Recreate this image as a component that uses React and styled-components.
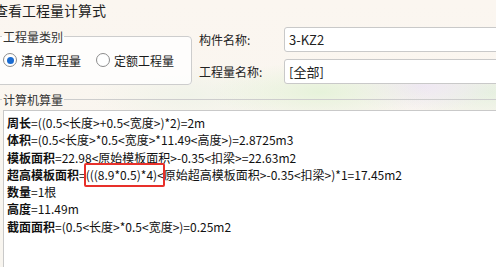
import React from "react"
import styled, { createGlobalStyle } from 'styled-components';

const GlobalStyle = createGlobalStyle`
    html, body {
        margin: 0;
        padding: 0;
    }
    body {
        width: 496px;
        height: 267px;
        overflow: hidden;
        font-family: "Noto Sans CJK SC", "Noto Sans", sans-serif;
        color: #1b1b1b;
    }
`;

const lines = [
    { label: '周长', rest: ['=((0.5<长度>+0.5<宽度>)*2)=2m'] },
    { label: '体积', rest: ['=(0.5<长度>*0.5<宽度>*11.49<高度>)=2.8725m3'] },
    { label: '模板面积', rest: ['=22.98<原始模板面积>-0.35<扣梁>=22.63m2'] },
    { label: '超高模板面积', rest: ['=', { mark: '(((8.9*0.5)*4)<' }, '原始超高模板面积>-0.35<扣梁>)*1=17.45m2'] },
    { label: '数量', rest: ['=1根'] },
    { label: '高度', rest: ['=11.49m'] },
    { label: '截面面积', rest: ['=(0.5<长度>*0.5<宽度>)=0.25m2'] },
];

const App = () => {
    return (
        <StyledWindow>
            <GlobalStyle />
            <Title>查看工程量计算式</Title>
            <TopSection>
                <Group $width={200}>
                    <Legend>工程量类别</Legend>
                    <RadioRow>
                        <RadioOption>
                            <RadioCircle $checked />
                            清单工程量
                        </RadioOption>
                        <RadioOption>
                            <RadioCircle />
                            定额工程量
                        </RadioOption>
                    </RadioRow>
                </Group>
                <Fields>
                    <FieldRow>
                        <FieldLabel>构件名称:</FieldLabel>
                        <Input>3-KZ2</Input>
                    </FieldRow>
                    <FieldRow>
                        <FieldLabel>工程量名称:</FieldLabel>
                        <Input>[全部]</Input>
                    </FieldRow>
                </Fields>
            </TopSection>
            <Group $width={540} $lower>
                <Legend>计算机算量</Legend>
                <FormulaBox>
                    {lines.map((line) => (
                        <FormulaLine key={line.label}>
                            <b>{line.label}</b>
                            {line.rest.map((part, i) =>
                                typeof part === 'string'
                                    ? <React.Fragment key={i}>{part}</React.Fragment>
                                    : <Marked key={i}>{part.mark}</Marked>
                            )}
                        </FormulaLine>
                    ))}
                </FormulaBox>
            </Group>
        </StyledWindow>
    )
}

const StyledWindow = styled.div`
    width: 496px;
    height: 267px;
    overflow: hidden;
    display: flex;
    flex-direction: column;
    background:
        radial-gradient(ellipse 110px 30px at 320px 92px, rgba(228, 242, 216, 0.9), transparent),
        radial-gradient(ellipse 80px 26px at 420px 86px, rgba(238, 230, 244, 0.9), transparent),
        radial-gradient(ellipse 90px 30px at 490px 92px, rgba(228, 240, 222, 0.9), transparent),
        radial-gradient(ellipse 100px 30px at 190px 95px, rgba(236, 242, 230, 0.7), transparent),
        linear-gradient(#fbf6f0, #f8f5ef);
`;

const Title = styled.div`
    height: 20px;
    line-height: 20px;
    font-size: 14px;
    margin-left: -6px;
    white-space: nowrap;
    color: #1f1f1f;
`;

const TopSection = styled.div`
    display: flex;
    align-items: flex-start;
    gap: 7px;
    margin-top: 7px;
`;

const Group = styled.fieldset`
    flex-shrink: 0;
    box-sizing: border-box;
    width: ${p => p.$width}px;
    margin: ${p => p.$lower ? '8px' : '3px'} 0 0 -8px;
    padding: ${p => p.$lower ? '4px 0 0 10px' : '10px 10px 17px 10px'};
    border: 1px solid #cdcdcd;
    border-radius: 4px;
    background: ${p => p.$lower ? 'transparent' : 'rgba(255, 255, 255, 0.8)'};
    min-width: 0;
`;

const Legend = styled.legend`
    padding: 0 1px;
    margin-left: -1px;
    font-size: 12px;
    line-height: 13px;
    color: #333;
`;

const RadioRow = styled.div`
    display: flex;
    align-items: center;
    gap: 15px;
    height: 14px;
`;

const RadioOption = styled.label`
    display: flex;
    align-items: center;
    gap: 4px;
    font-size: 12px;
    white-space: nowrap;
`;

const RadioCircle = styled.span`
    width: 14px;
    height: 14px;
    box-sizing: border-box;
    border-radius: 50%;
    border: 1px solid #8c8c8c;
    background: #fff;
    display: flex;
    align-items: center;
    justify-content: center;
    &::after {
        content: "";
        width: 7px;
        height: 7px;
        border-radius: 50%;
        background: #1a6bd0;
        display: ${p => p.$checked ? 'block' : 'none'};
    }
`;

const Fields = styled.div`
    display: flex;
    flex-direction: column;
    gap: 7px;
    flex: 1;
    min-width: 0;
`;

const FieldRow = styled.div`
    display: flex;
    align-items: center;
    height: 25px;
`;

const FieldLabel = styled.span`
    width: 85px;
    flex-shrink: 0;
    font-size: 12px;
    color: #222;
    white-space: nowrap;
`;

const Input = styled.div`
    flex: 1;
    height: 25px;
    box-sizing: border-box;
    margin-right: -20px;
    padding-left: 4px;
    border: 1px solid #c9c9c9;
    border-radius: 3px;
    background: #fff;
    font-size: 13px;
    line-height: 23px;
    color: #222;
`;

const FormulaBox = styled.div`
    height: 200px;
    box-sizing: border-box;
    padding: 3px;
    border: 1px solid #c9c9c9;
    background: #fff;
    font-size: 12px;
    line-height: 17.3px;
    color: #111;
    b {
        font-weight: 700;
    }
`;

const FormulaLine = styled.div`
    white-space: nowrap;
`;

const Marked = styled.span`
    position: relative;
    &::after {
        content: "";
        position: absolute;
        top: -3px;
        bottom: -4px;
        left: -2px;
        right: -1px;
        border: 2px solid #e8302a;
        border-radius: 2px;
    }
`;

export default App
